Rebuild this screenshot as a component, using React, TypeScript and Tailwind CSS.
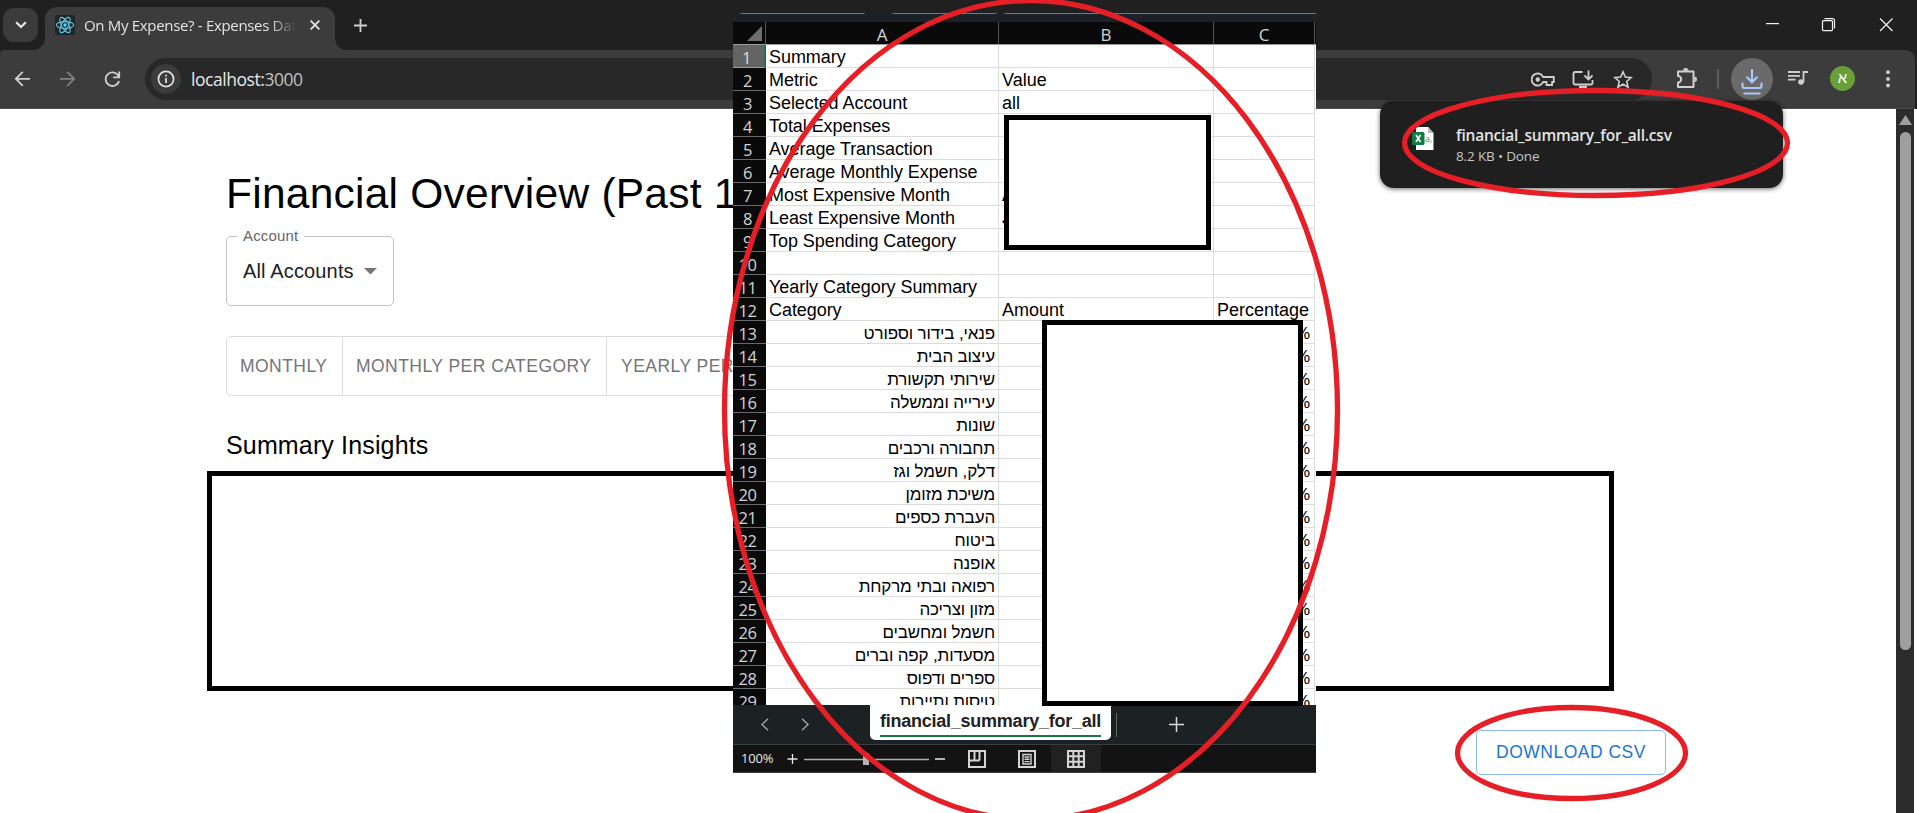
import React from "react";

const rows: { a?: string; b?: string; c?: string; he?: string }[] = [
  { a: "Summary" },
  { a: "Metric", b: "Value" },
  { a: "Selected Account", b: "all" },
  { a: "Total Expenses" },
  { a: "Average Transaction" },
  { a: "Average Monthly Expense" },
  { a: "Most Expensive Month", b: "A" },
  { a: "Least Expensive Month", b: "J" },
  { a: "Top Spending Category" },
  {},
  { a: "Yearly Category Summary" },
  { a: "Category", b: "Amount", c: "Percentage" },
  { he: "פנאי, בידור וספורט" },
  { he: "עיצוב הבית" },
  { he: "שירותי תקשורת" },
  { he: "עירייה וממשלה" },
  { he: "שונות" },
  { he: "תחבורה ורכבים" },
  { he: "דלק, חשמל וגז" },
  { he: "משיכת מזומן" },
  { he: "העברת כספים" },
  { he: "ביטוח" },
  { he: "אופנה" },
  { he: "רפואה ובתי מרקחת" },
  { he: "מזון וצריכה" },
  { he: "חשמל ומחשבים" },
  { he: "מסעדות, קפה וברים" },
  { he: "ספרים ודפוס" },
  { he: "טיסות ותיירות" },
];

function TabStrip() {
  return (
    <div className="flex h-[50px] bg-[#202020] text-[#e3e3e3]">
      <div className="ml-[3px] mt-2 flex h-[34px] w-[35px] shrink-0 items-center justify-center rounded-[11px] bg-[#3b3b3b]">
        <svg width="12" height="8" viewBox="0 0 12 8" fill="none" stroke="#e8e8e8" strokeWidth="2.200"><path d="M1.200 1.200 6 6l4.800-4.800" /></svg>
      </div>
      <div className="relative ml-[7px] mt-[7px] flex h-[43px] w-[290px] items-start rounded-t-[12px] bg-[#3c3c3c]">
        <svg className="absolute -left-[12px] bottom-0" width="12" height="12"><path d="M12 0V12H0A12 12 0 0 0 12 0Z" fill="#3c3c3c" /></svg>
        <svg className="absolute -right-[12px] bottom-0" width="12" height="12"><path d="M0 0V12H12A12 12 0 0 1 0 0Z" fill="#3c3c3c" /></svg>
        <svg className="ml-[10px] mt-2 shrink-0" width="20" height="20" viewBox="0 0 20 20">
          <rect width="20" height="20" rx="2" fill="#20252a" />
          <g fill="none" stroke="#5fc6de" strokeWidth="1.100">
            <ellipse cx="10" cy="10" rx="8.600" ry="3.400" />
            <ellipse cx="10" cy="10" rx="8.600" ry="3.400" transform="rotate(60 10 10)" />
            <ellipse cx="10" cy="10" rx="8.600" ry="3.400" transform="rotate(120 10 10)" />
          </g>
          <circle cx="10" cy="10" r="1.700" fill="#61dafb" />
        </svg>
        <div className="ml-[9px] mt-[7px] w-[212px] overflow-hidden whitespace-nowrap text-[15px] leading-[22px] tracking-[-0.320px] [mask-image:linear-gradient(to_right,black_186px,transparent_212px)]">
          On My Expense? - Expenses Data
        </div>
        <svg className="ml-[14px] mt-[13px]" width="10" height="10" viewBox="0 0 10 10" stroke="#e3e3e3" strokeWidth="1.800"><path d="M.6.6l8.800 8.800M9.400.6.6 9.400" /></svg>
      </div>
      <svg className="ml-[19px] mt-[19px]" width="13" height="13" viewBox="0 0 13 13" stroke="#cfcfcf" strokeWidth="1.800"><path d="M6.500 0v13M0 6.500h13" /></svg>
      <svg className="ml-auto mr-[23px] mt-[17px]" width="128" height="15" viewBox="0 0 128 15" fill="none" stroke="#f2f2f2" strokeWidth="1.200">
        <path d="M0 6.600h13" />
        <rect x="56.500" y="3.600" width="10" height="10" rx="1" />
        <path d="M58.500 1.600h8a2 2 0 0 1 2 2v8" />
        <path d="M114 1.500l12.500 12.500M126.500 1.500l-12.500 12.500" />
      </svg>
    </div>
  );
}

function Toolbar() {
  return (
    <div className="flex h-[59px] shrink-0 items-start bg-[#202020]">
      <div className="flex h-[59px] flex-1 items-start rounded-tr-[9px] rounded-tl-[4px] border-b border-[#4a4a4a] bg-[#3c3c3c]">
        <svg className="ml-[14px] mt-[20px] shrink-0" width="108" height="18" viewBox="0 0 108 18" fill="none" strokeWidth="1.800">
          <path stroke="#d0d0d0" d="M16 8.800H2.200M8.800 1.800 1.800 8.800l7 7" />
          <path stroke="#808080" d="M46 8.800h13.800M53.200 1.800l7 7-7 7" />
          <path stroke="#d0d0d0" d="M104.800 6.700A6.800 6.800 0 1 0 105 11M105.200 1.500v5.800h-6" />
        </svg>
        <div className="ml-[23px] mt-2 flex h-[42px] w-[1507px] items-center rounded-full bg-[#282828]">
          <div className="ml-[6px] flex h-[30px] w-[30px] items-center justify-center rounded-full bg-[#3c3c3c]">
            <svg width="18" height="18" viewBox="0 0 18 18" fill="none" stroke="#e3e3e3" strokeWidth="1.700"><circle cx="9" cy="9" r="7.600" /><path d="M9 8v5M9 4.800v1.800" /></svg>
          </div>
          <div className="ml-[10px] text-[17.500px] tracking-[-0.450px] text-[#e8e8e8]">localhost:<span className="text-[#c0c0c0]">3000</span></div>
          <svg className="ml-auto mr-[19px]" width="102" height="20" viewBox="0 0 102 20" fill="none" stroke="#cfcfcf" strokeWidth="1.800">
            <path d="M12.100 8A6 6 0 1 0 12.100 13h3.400v3h5.600v-3h1.700V8Z" />
            <circle cx="6.800" cy="10.500" r="2.200" fill="#cfcfcf" stroke="none" />
            <path d="M51.500 3h-7.500a1.500 1.500 0 0 0-1.500 1.500v9.500a1.500 1.500 0 0 0 1.500 1.500h16a1.500 1.500 0 0 0 1.500-1.500v-3M57.500 1.500v8.500M53.500 6.500l4 4 4-4" />
            <path d="M48 18h8" strokeWidth="2.500" />
            <path strokeWidth="1.600" d="M92 2.800l2.300 5.300 5.800.5-4.400 3.900 1.400 5.700-5.100-3.100-5.100 3.100 1.400-5.700-4.400-3.900 5.800-.5Z" />
          </svg>
        </div>
        <svg className="ml-[23px] mt-[17px] shrink-0" width="24" height="22" viewBox="0 0 24 22" fill="none" stroke="#cfcfcf" strokeWidth="2">
          <path strokeLinejoin="round" d="M3 4.500h15.500V20H3v-4.500a3.200 3.200 0 0 0 0-6.400Z" />
          <path fill="#cfcfcf" stroke="none" d="M8 3.800a2.700 2.700 0 0 1 5.400 0ZM19.300 9.600a2.700 2.700 0 0 1 0 5.400Z" />
        </svg>
        <div className="ml-[18px] mt-[19px] h-5 w-[2px] shrink-0 bg-[#5c5c5c]" />
        <div className="ml-[12px] mt-2 flex h-[42px] w-[42px] shrink-0 items-center justify-center rounded-full bg-[#6a6a6a]">
          <svg className="mt-[6px]" width="22" height="28" viewBox="0 0 22 28" fill="none" stroke="#a8c7fa" strokeWidth="2.200">
            <path d="M11 1v13M5.500 8.800l5.500 5.500 5.500-5.500M1.500 14.500v3.500a2 2 0 0 0 2 2h15a2 2 0 0 0 2-2v-3.500M2.500 25.500h17" />
          </svg>
        </div>
        <svg className="ml-[15px] mt-[20px] shrink-0" width="21" height="17" viewBox="0 0 21 17" fill="none" stroke="#cfcfcf" strokeWidth="1.800">
          <path d="M0 2h12M0 5.800h12M0 9.600h7.500M15.500 12V2h4.500" />
          <circle cx="13" cy="12" r="2.800" fill="#cfcfcf" stroke="none" />
        </svg>
        <div className="ml-[21px] mt-4 flex h-[25px] w-[25px] shrink-0 items-center justify-center rounded-full bg-[#689f38] font-['Liberation_Sans',sans-serif] text-[15px] text-white">א</div>
        <svg className="ml-[31px] mt-[20px] shrink-0" width="4" height="18" fill="#cfcfcf"><circle cx="2" cy="2.200" r="1.900" /><circle cx="2" cy="9" r="1.900" /><circle cx="2" cy="15.500" r="1.900" /></svg>
      </div>
      <div className="w-[2px]" />
    </div>
  );
}

function Page() {
  return (
    <div className="flex flex-1 overflow-hidden bg-white">
      <main className="flex-1 overflow-hidden pl-[226px] pt-[59px] text-black">
        <h1 className="h-[52px] whitespace-nowrap text-[42.500px] leading-[51px] tracking-[0.240px]">Financial Overview (Past 1</h1>
        <div className="relative mt-4 flex h-[70px] w-[168px] items-center rounded-[5px] border border-[#c4c4c4] pl-4">
          <span className="absolute -top-[13px] left-[10px] bg-white px-[6px] text-[15px] leading-[23px] tracking-[0.150px] text-[#666]">Account</span>
          <span className="text-[20px] leading-[29px] tracking-[0.150px] text-[#212121]">All Accounts</span>
          <svg className="ml-[10px]" width="13" height="7"><path d="M0 0h13L6.500 6.500Z" fill="#757575" /></svg>
        </div>
        <div className="mt-[30px] flex h-[60px] w-[900px] rounded-[5px] border border-[#dcdcdc] text-[17.500px] tracking-[0.460px] text-[#757575]">
          <div className="flex w-[116px] items-center border-r border-[#dcdcdc] pl-[13px]">MONTHLY</div>
          <div className="flex w-[264px] items-center border-r border-[#dcdcdc] pl-[13px]">MONTHLY PER CATEGORY</div>
          <div className="flex items-center whitespace-nowrap pl-[14px]">YEARLY PER</div>
        </div>
        <h2 className="mt-[30px] h-10 text-[25px] leading-[38px] tracking-[0.150px]">Summary Insights</h2>
        <div className="-ml-[19px] mt-[5px] h-[220px] w-[1407px] border-[5px] border-black" />
        <button className="ml-[1250px] mt-[39px] flex h-[45px] w-[190px] items-center justify-center rounded-[5px] border border-[#8dbae6] text-[17.500px] tracking-[0.500px] text-[#1976d2]">DOWNLOAD CSV</button>
      </main>
      <div className="flex w-[21px] shrink-0">
        <div className="flex w-[18px] flex-col items-center bg-[#2c2c2c] pt-[6px]">
          <svg width="13" height="10"><path d="M6.500 0 13 10H0Z" fill="#9f9f9f" /></svg>
          <div className="mt-[7px] h-[518px] w-[11px] rounded-full bg-[#9f9f9f]" />
        </div>
      </div>
    </div>
  );
}

function Sheet() {
  return (
    <section className="absolute left-[733px] top-[12px] flex h-[761px] w-[583px] flex-col overflow-hidden bg-[#1b2126] font-['Liberation_Sans',sans-serif] text-black">
      <div className="flex h-[10px] shrink-0 gap-[27px] pl-[7px]">
        <div className="h-[2px] w-[125px] rounded-b border-b border-[#777]" />
        <div className="h-[2px] w-[105px] rounded-b border-b border-[#777]" />
        <div className="-ml-[20px] h-[2px] flex-1 rounded-bl border-b border-[#777]" />
      </div>
      <div className="flex h-[23px] shrink-0 border-b border-[#9a9a9a] bg-[#0a0a0a] font-['Open_Sans',sans-serif] text-[17px] leading-[25px] text-[#d4d4d4]">
        <div className="flex w-[33px] items-end justify-end border-r border-[#555] pb-[3px] pr-[3px]"><svg width="15" height="15"><path d="M15 0V15H0Z" fill="#6e6e6e" /></svg></div>
        <div className="w-[233px] border-r border-[#555] text-center">A</div>
        <div className="w-[215px] border-r border-[#555] text-center">B</div>
        <div className="w-[101px] border-r border-[#555] text-center">C</div>
      </div>
      <div className="relative h-[660px] shrink-0 overflow-hidden bg-white text-[18px]">
        {rows.map((r, i) => (
          <div key={i} className="flex h-[23px] leading-[25px]">
            <div className={i === 0
              ? "w-[33px] border-b border-r-2 border-b-[#9a9a9a] border-r-[#217346] bg-[#646464] pr-[4px] text-center font-['Open_Sans',sans-serif] text-[16.500px] tracking-[-0.400px] text-[#dcdcdc]"
              : "w-[33px] border-b border-b-[#6a6a6a] bg-[#0a0a0a] pr-[4px] text-center font-['Open_Sans',sans-serif] text-[16.500px] tracking-[-0.400px] text-[#d4d4d4]"}>{i + 1}</div>
            <div className="w-[233px] overflow-hidden whitespace-nowrap border-b border-r border-[#dcdcdc] pl-[3px] pr-[3px] tracking-[-0.060px]">
              {r.he ? <div dir="rtl" className="text-[17px] tracking-[-0.150px]">{r.he}</div> : r.a}
            </div>
            <div className="w-[215px] border-b border-r border-[#dcdcdc] pl-[3px]">{r.b}</div>
            <div className="w-[101px] border-b border-r border-[#dcdcdc] pl-[3px] pr-[4px]">
              {r.he ? <div className="text-right text-[17px]">%</div> : r.c}
            </div>
          </div>
        ))}
      </div>
      <div className="flex h-[40px] shrink-0 items-start border-b border-[#3a3d3f] bg-[#1c2124]">
        <svg className="ml-[28px] mt-[13px]" width="49" height="13" viewBox="0 0 49 13" fill="none" stroke="#a0a0a0" strokeWidth="1.500"><path d="M7 .8 1 6.500l6 5.700M41 .8l6 5.700-6 5.700" /></svg>
        <div className="ml-[60px] flex h-[35px] w-[241px] flex-col items-center rounded-b-[5px] bg-white text-[18px] font-bold leading-[32px] tracking-[-0.240px] text-[#222]">
          <div className="h-[32px] border-b-2 border-[#217346]">financial_summary_for_all</div>
        </div>
        <div className="ml-[5px] mt-2 h-6 w-px bg-[#666]" />
        <svg className="ml-[52px] mt-[12px]" width="15" height="15" stroke="#dcdcdc" strokeWidth="1.500"><path d="M7.500 0v15M0 7.500h15" /></svg>
      </div>
      <div className="flex h-[28px] shrink-0 items-center border-b border-[#3a3d3f] bg-[#131313] font-['Open_Sans',sans-serif] text-[13px] text-[#e8e8e8]">
        <span className="ml-2 w-[32px] tracking-[-0.200px]">100%</span>
        <svg className="ml-[14px]" width="158" height="14" fill="none" stroke="#e8e8e8" strokeWidth="1.300">
          <path d="M5.500 2v10M.5 7h10M148 7h10" /><path d="M17 7.500h125" stroke="#a8b0ac" /><path d="M76 1h6v12h-6Z" fill="#b4b4b4" stroke="none" />
        </svg>
        <svg className="ml-[23px]" width="18" height="18" fill="none" stroke="#d4d4d4" strokeWidth="2"><path d="M1 1h16v16H1ZM6.500 1v9.500M11.500 1v9.500M1 10.500h10.500" /></svg>
        <svg className="ml-[32px]" width="18" height="18" fill="none" stroke="#d4d4d4" strokeWidth="2"><path d="M1 1h16v16H1Z" /><path strokeWidth="1.400" d="M5 4.500h8v9.500H5ZM6.500 7h5M6.500 9.300h5M6.500 11.600h5" /></svg>
        <div className="ml-[15px] flex h-full w-[50px] items-center justify-center bg-[#212121]">
          <svg width="18" height="18" fill="none" stroke="#d4d4d4" strokeWidth="2"><path d="M1 1h16v16H1ZM6.300 1v16M11.700 1v16M1 6.300h16M1 11.700h16" /></svg>
        </div>
      </div>
      <div className="absolute left-[271px] top-[103px] h-[135px] w-[207px] border-[5px] border-black bg-white" />
      <div className="absolute left-[309px] top-[308px] h-[386px] w-[261px] border-[5px] border-black bg-white" />
    </section>
  );
}

function DownloadBubble() {
  return (
    <aside className="absolute left-[1380px] top-[101px] flex h-[87px] w-[403px] rounded-[14px] bg-[#1f1f1f] shadow-[0_1px_5px_rgba(0,0,0,0.6)]">
      <svg className="ml-[32px] mt-[25px] shrink-0" width="22" height="25" viewBox="0 0 22 25">
        <path d="M4 1h12l5.500 6v17H4Z" fill="#fff" /><path d="M16 1v6h5.500Z" fill="#bbb" />
        <text x="13" y="16" fontSize="9" fill="#21a366">a,</text>
        <rect y="6" width="12.500" height="13" rx="1.500" fill="#107c41" />
        <path d="M4 9l4.500 7M8.500 9 4 16" stroke="#fff" strokeWidth="1.700" />
      </svg>
      <div className="ml-[22px] mt-[22px]">
        <div className="text-[15.500px] font-semibold leading-[24px] tracking-[-0.210px] text-[#e3e3e3]">financial_summary_for_all.csv</div>
        <div className="text-[13.500px] leading-[18px] tracking-[-0.150px] text-[#c7c7c7]">8.2 KB • Done</div>
      </div>
    </aside>
  );
}

export default function App() {
  return (
    <div className="relative flex h-[813px] w-[1917px] flex-col overflow-hidden font-['Liberation_Sans',sans-serif]">
      <header className="shrink-0 font-['Open_Sans','Liberation_Sans',sans-serif]">
        <TabStrip />
        <Toolbar />
      </header>
      <Page />
      <Sheet />
      <div className="font-['Open_Sans',sans-serif]"><DownloadBubble /></div>
      <svg className="absolute left-0 top-0" width="1917" height="813" fill="none" stroke="#e61f27" strokeWidth="5.300">
        <ellipse cx="1031" cy="410" rx="306.500" ry="409.500" />
        <ellipse cx="1596" cy="143" rx="191.500" ry="52.500" />
        <ellipse cx="1571.500" cy="753" rx="114" ry="45.500" />
      </svg>
    </div>
  );
}
